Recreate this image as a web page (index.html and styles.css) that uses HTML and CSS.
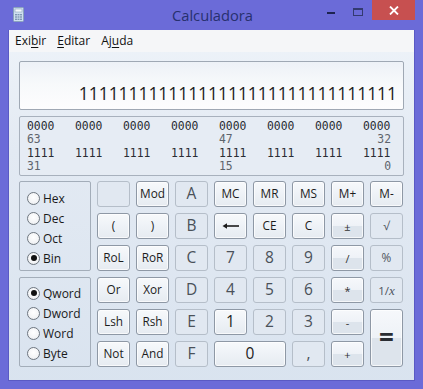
FILE: index.html
```html
<!DOCTYPE html>
<html lang="pt">
<head>
<meta charset="utf-8">
<title>Calculadora</title>
<link rel="stylesheet" href="styles.css">
</head>
<body>
<div class="window">
  <div class="titlebar">
    <svg class="app-icon" width="11" height="15" viewBox="0 0 11 15">
      <rect x="0.5" y="0.5" width="10" height="14" rx="1" fill="#cfe0f0" stroke="#8aa3bd"/>
      <rect x="2" y="2" width="7" height="3" fill="#f4f8fc" stroke="#8aa3bd" stroke-width="0.6"/>
      <g fill="#7f97b3">
        <rect x="2" y="7" width="2" height="1.4"/><rect x="4.5" y="7" width="2" height="1.4"/><rect x="7" y="7" width="2" height="1.4"/>
        <rect x="2" y="9.3" width="2" height="1.4"/><rect x="4.5" y="9.3" width="2" height="1.4"/><rect x="7" y="9.3" width="2" height="1.4"/>
        <rect x="2" y="11.6" width="2" height="1.4"/><rect x="4.5" y="11.6" width="2" height="1.4"/><rect x="7" y="11.6" width="2" height="1.4"/>
      </g>
    </svg>
    <div class="title">Calculadora</div>
    <div class="controls">
      <span class="ctl-min"></span>
      <span class="ctl-max"></span>
      <span class="ctl-close">
        <svg width="10" height="9" viewBox="0 0 10 9"><path d="M1 0.5 L9 8.5 M9 0.5 L1 8.5" stroke="#fff" stroke-width="1.8"/></svg>
      </span>
    </div>
  </div>
  <div class="client">
    <div class="menubar">
      <span class="menu-item">Exi<u>b</u>ir</span>
      <span class="menu-item"><u>E</u>ditar</span>
      <span class="menu-item">Aj<u>u</u>da</span>
    </div>
    <div class="content">
      <div class="display">11111111111111111111111111111111</div>
      <div class="binary">
        <div class="bin-row bits"><span>0000</span><span>0000</span><span>0000</span><span>0000</span><span>0000</span><span>0000</span><span>0000</span><span>0000</span></div>
        <div class="bin-row idx"><span>63</span><span></span><span></span><span></span><span>47</span><span></span><span></span><span class="r">32</span></div>
        <div class="bin-row bits"><span>1111</span><span>1111</span><span>1111</span><span>1111</span><span>1111</span><span>1111</span><span>1111</span><span>1111</span></div>
        <div class="bin-row idx"><span>31</span><span></span><span></span><span></span><span>15</span><span></span><span></span><span class="r">0</span></div>
      </div>
      <div class="keypad">
        <div class="radio-group g1">
          <label class="radio"><span class="dot"></span>Hex</label>
          <label class="radio"><span class="dot"></span>Dec</label>
          <label class="radio"><span class="dot"></span>Oct</label>
          <label class="radio"><span class="dot on"></span>Bin</label>
        </div>
        <div class="radio-group g2">
          <label class="radio"><span class="dot on"></span>Qword</label>
          <label class="radio"><span class="dot"></span>Dword</label>
          <label class="radio"><span class="dot"></span>Word</label>
          <label class="radio"><span class="dot"></span>Byte</label>
        </div>

        <div class="key dis"></div>
        <div class="key en">Mod</div>
        <div class="key dis big">A</div>
        <div class="key en">MC</div>
        <div class="key en">MR</div>
        <div class="key en">MS</div>
        <div class="key en">M+</div>
        <div class="key en">M-</div>

        <div class="key en">(</div>
        <div class="key en">)</div>
        <div class="key dis big">B</div>
        <div class="key en"><svg width="18" height="6" viewBox="0 0 18 6"><path d="M2 3 H17" stroke="#1c1c1c" stroke-width="1.6"/><path d="M0.5 3 L5 0.2 V5.8 Z" fill="#1c1c1c"/></svg></div>
        <div class="key en">CE</div>
        <div class="key en">C</div>
        <div class="key op">±</div>
        <div class="key dis">√</div>

        <div class="key en">RoL</div>
        <div class="key en">RoR</div>
        <div class="key dis big">C</div>
        <div class="key dis big">7</div>
        <div class="key dis big">8</div>
        <div class="key dis big">9</div>
        <div class="key op">/</div>
        <div class="key dis">%</div>

        <div class="key en">Or</div>
        <div class="key en">Xor</div>
        <div class="key dis big">D</div>
        <div class="key dis big">4</div>
        <div class="key dis big">5</div>
        <div class="key dis big">6</div>
        <div class="key op">*</div>
        <div class="key dis"><span class="inv">1/<i>x</i></span></div>

        <div class="key en">Lsh</div>
        <div class="key en">Rsh</div>
        <div class="key dis big">E</div>
        <div class="key en big">1</div>
        <div class="key dis big">2</div>
        <div class="key dis big">3</div>
        <div class="key op">-</div>
        <div class="key op equals">=</div>

        <div class="key en">Not</div>
        <div class="key en">And</div>
        <div class="key dis big">F</div>
        <div class="key en big zero">0</div>
        <div class="key dis big">,</div>
        <div class="key op">+</div>
      </div>
    </div>
  </div>
</div>
</body>
</html>
```

FILE: styles.css
```css
* { box-sizing: border-box; }
html, body { margin: 0; padding: 0; }
body {
  width: 423px;
  height: 389px;
  background: #6b6bd8;
  font-family: "Open Sans", "Noto Sans", sans-serif;
  overflow: hidden;
}
.window {
  width: 423px;
  height: 389px;
  display: flex;
  flex-direction: column;
}
.titlebar {
  height: 30px;
  position: relative;
  display: flex;
  align-items: flex-start;
}
.app-icon { margin: 7px 0 0 13px; }
.title {
  position: absolute;
  left: 0; right: 0; top: 5px;
  text-align: center;
  font-size: 14.7px;
  color: #27306e;
  line-height: 20px;
  padding-left: 2px;
}
.controls {
  margin-left: auto;
  margin-right: 8px;
  display: flex;
  align-items: flex-start;
  height: 20px;
}
.ctl-min {
  width: 8px; height: 2px;
  background: #1d2350;
  margin-top: 12px;
  margin-right: 18px;
}
.ctl-max {
  width: 10px; height: 8px;
  border: 1px solid #333a70;
  border-top-width: 2px;
  margin-top: 8px;
  margin-right: 9px;
}
.ctl-close {
  width: 43px; height: 20px;
  background: #c75050;
  display: flex;
  align-items: center;
  justify-content: center;
  padding-top: 1px;
}
.client {
  flex: 1;
  margin: 0 8px 8px 8px;
  background: linear-gradient(#eef3f9 0px, #e3eaf3 120px, #d9e3ef 360px);
  display: flex;
  flex-direction: column;
  border: 1px solid #5a5ac4;
  border-top: 0;
}
.menubar {
  height: 22px;
  background: #f5f6f8;
  display: flex;
  align-items: center;
  font-size: 12px;
  color: #111;
  padding-left: 6px;
  gap: 0;
}
.menu-item { margin-right: 11px; line-height: 16px; }
.menu-item u { text-underline-offset: 2px; text-decoration-thickness: 1px; }
.content {
  padding: 9px 10px 0 10px;
  display: flex;
  flex-direction: column;
}
.display {
  height: 49px;
  border: 1px solid #9fa8b4;
  border-radius: 2px;
  background: linear-gradient(#edf1f7 0%, #f7f9fb 45%, #fdfdfe 100%);
  font-size: 17.4px;
  color: #1b1b1b;
  text-align: right;
  padding: 18px 6px 0 0;
  line-height: 26px;
  letter-spacing: 0;
}
.binary {
  margin-top: 6px;
  height: 60px;
  border: 1px solid #a8b1bd;
  border-radius: 2px;
  background: #e6ecf4;
  padding: 3px 0 0 7px;
  font-family: "DejaVu Sans Mono", "Liberation Mono", monospace;
  font-size: 11.4px;
}
.bin-row {
  display: grid;
  grid-template-columns: repeat(7, 48px) 28px;
  height: 13.3px;
  line-height: 13.3px;
}
.bin-row.bits { color: #2a2d33; }
.bin-row.idx { color: #5e646c; }
.bin-row .r { text-align: right; }
.keypad {
  margin-top: 5px;
  display: grid;
  grid-template-columns: 72px repeat(8, 33px);
  grid-template-rows: repeat(6, 26px);
  column-gap: 6px;
  row-gap: 6px;
}
.radio-group {
  grid-column: 1;
  border: 1px solid #a3adb9;
  border-radius: 2px;
  display: flex;
  flex-direction: column;
  padding: 6px 0 0 7px;
  gap: 0;
}
.g1 { grid-row: 1 / span 3; }
.g2 { grid-row: 4 / span 3; padding-top: 5px; }
.radio {
  height: 20px;
  display: flex;
  align-items: center;
  font-size: 12px;
  color: #1a1a1a;
}
.dot {
  width: 13px; height: 13px;
  border-radius: 50%;
  border: 1px solid #6f7780;
  background: radial-gradient(circle at 50% 40%, #ffffff 0%, #f3f4f6 60%, #dfe2e6 100%);
  margin-right: 3px;
  display: flex;
  align-items: center;
  justify-content: center;
}
.dot.on::after {
  content: "";
  width: 6px; height: 6px;
  border-radius: 50%;
  background: #111;
}
.key {
  border-radius: 3px;
  display: flex;
  align-items: center;
  justify-content: center;
  font-size: 11.8px;
  line-height: 1;
}
.key.en {
  border: 1px solid #8e98a5;
  background: linear-gradient(#f7f9fb 0%, #eef2f7 50%, #e6ebf1 100%);
  box-shadow: inset 0 0 0 1px rgba(255,255,255,0.7);
  color: #1c1c1c;
}
.key.dis {
  border: 1px solid #b5bec9;
  background: #e1e8f1;
  color: #4e555e;
}
.key.op {
  border: 1px solid #8e98a5;
  background: linear-gradient(#f6f8fb 0%, #eef2f7 50%, #dde4ec 50%, #dde4ec 100%);
  box-shadow: inset 0 0 0 1px rgba(255,255,255,0.7);
  color: #333;
  font-size: 11px;
}
.key.big { font-size: 15.5px; }
.key.dis.big { color: #4a5159; }
.key.zero { grid-column: span 2; }
.key.equals {
  grid-row: span 2;
  font-size: 26px;
  font-weight: bold;
  color: #2a2d33;
  padding-bottom: 2px;
}
.inv { font-size: 11.5px; color: #4e555e; }
.inv i { font-family: "Liberation Serif", serif; font-size: 13px; }
```
